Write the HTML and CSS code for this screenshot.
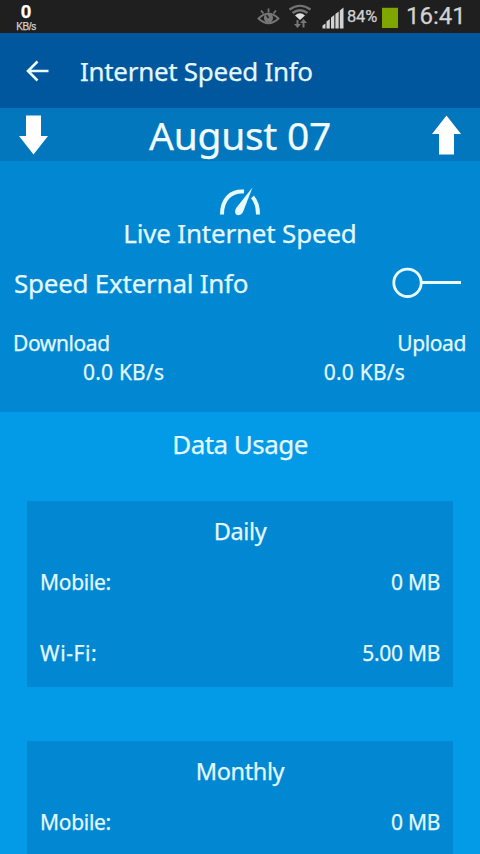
FILE: index.html
```html
<!DOCTYPE html>
<html lang="en">
  <head>
    <meta charset="UTF-8" />
    <meta name="viewport" content="width=device-width, initial-scale=1.0" />
    <title>Internet Speed Info</title>
    <link rel="stylesheet" href="styles.css">
  </head>
  <body>
    <div class="status">
      <div class="net-speed">
        <b>0</b>
        <span>KB/s</span>
      </div>
      <svg class="status-icons" width="104" height="33" viewBox="0 0 104 33">
        <!-- smart stay eye -->
        <g fill="none" stroke="#777" stroke-width="1.8">
          <path d="M1.500 18.500Q11.500 9 21.500 18.500Q11.500 28 1.500 18.500Z" />
          <path d="M4 10.500l2.500 3M11.500 8.500v4M19 10.500l-2.500 3" />
        </g>
        <circle cx="11.500" cy="18" r="4.600" fill="#777" />
        <path d="M11.500 18L9.500 15" stroke="#222" stroke-width="1.500" />
        <!-- wifi -->
        <g fill="none" stroke="#747474" stroke-width="2.200">
          <path d="M32.500 9.500Q43 2 53.500 9.500" />
          <path d="M35.500 13Q43 7.500 50.500 13" />
        </g>
        <path d="M38 15.500Q43 11 48 15.500L43 20Z" fill="#ddd" />
        <path d="M40.500 20v6M46.500 21.500v6" stroke="#777" stroke-width="2" />
        <path d="M37 24h7L40.500 28ZM43 23h7L46.500 19Z" fill="#777" />
        <!-- signal -->
        <path d="M65.500 28.500v-3l3-2v5ZM69.500 28.500v-7l3.300-2.500v9.500ZM74 28.500v-11l3.300-2.500v13.500ZM78.400 28.500v-14.500l3.300-2.500v17ZM82.800 28.500v-18l3.700-3v21Z" fill="#d2d2d2" />
      </svg>
      <span class="percent">84%</span>
      <span class="battery"></span>
      <span class="clock">16:41</span>
    </div>

    <div class="header">
      <svg class="back" width="24" height="24" viewBox="0 0 24 24">
        <path d="M23.500 12H3M12.500 2.500L3 12l9.500 9.500" />
      </svg>
      <h1>Internet Speed Info</h1>
    </div>

    <div class="date">
      <svg class="arrow" width="30" height="40" viewBox="0 0 30 40">
        <path d="M8 0.500h15v20.500h7L15.500 39.500 1 21h7Z" />
      </svg>
      <span class="day">August 07</span>
      <svg class="arrow" width="30" height="40" viewBox="0 0 30 40">
        <path d="M7 39.500h15V19h7L14.500 0.500 0 19h7Z" />
      </svg>
    </div>

    <div class="live">
      <svg class="gauge" width="42" height="30" viewBox="0 0 42 30">
        <g fill="none" stroke="#e8f9ff" stroke-width="4">
          <path d="M3 27.500C3 12 12 3.500 25 4.500" />
          <path d="M33.500 10C37.500 14.500 39 20.500 39 27.500" />
        </g>
        <path d="M33.500 0.500L17.500 20.500C13 28 20.500 31 24 25Z" fill="#e8f9ff" />
      </svg>
      <h2>Live Internet Speed</h2>
      <div class="external">
        <span>Speed External Info</span>
        <svg class="switch" width="70" height="32" viewBox="0 0 70 32">
          <circle cx="16.500" cy="15.800" r="13.700" />
          <path d="M30.500 15.500h39.500" />
        </svg>
      </div>
      <div class="labels">
        <span>Download</span>
        <span>Upload</span>
      </div>
      <div class="values">
        <span>0.0 KB/s</span>
        <span>0.0 KB/s</span>
      </div>
    </div>

    <div class="usage">
      <h2 class="usage-title">Data Usage</h2>
      <div class="card">
        <h3>Daily</h3>
        <div class="row"><span>Mobile:</span><span>0 MB</span></div>
        <div class="row"><span class="wifi">Wi-Fi:</span><span>5.00 MB</span></div>
      </div>
      <div class="card monthly">
        <h3>Monthly</h3>
        <div class="row"><span>Mobile:</span><span>0 MB</span></div>
      </div>
    </div>
  </body>
</html>
```
FILE: styles.css
```css
* {
  margin: 0;
  padding: 0;
  box-sizing: border-box;
}
body {
  height: 854px;
  overflow: hidden;
  display: flex;
  flex-direction: column;
  background-color: #039be8;
  color: #e4f8ff;
  font-family: "Noto Sans", sans-serif;
  -webkit-text-stroke: 0.25px;
}
h1,
h2,
h3 {
  font-weight: 400;
}
span {
  white-space: nowrap;
}
.status {
  height: 33px;
  flex: none;
  display: flex;
  align-items: center;
  padding-left: 15px;
  background-color: #1f1f1f;
  color: #d2d2d2;
}
.net-speed {
  width: 22px;
  padding-top: 1px;
  margin-right: 220px;
  text-align: center;
  font-family: "Liberation Sans", sans-serif;
}
.net-speed b {
  display: block;
  font-size: 19px;
  line-height: 18px;
  color: #fff;
}
.net-speed span {
  display: block;
  font-size: 10px;
  line-height: 11px;
  letter-spacing: -0.4px;
}
.status-icons {
  flex: none;
}
.percent {
  width: 32px;
  margin-left: -14px;
  font-family: Roboto, sans-serif;
  font-size: 16.5px;
  letter-spacing: -0.2px;
}
.battery {
  width: 16px;
  height: 20px;
  margin: 3px 8px 0 3px;
  background-color: #7fa600;
  box-shadow: 0 -1px #343b22;
}
.clock {
  font-family: Roboto, sans-serif;
  font-size: 24px;
  line-height: 33px;
}
.header {
  height: 75px;
  flex: none;
  display: flex;
  align-items: center;
  padding-left: 25px;
  background-color: #01579e;
}
.back {
  margin-right: 31px;
  fill: none;
  stroke: #e8f9ff;
  stroke-width: 2.6;
}
.header h1 {
  font-size: 26px;
  letter-spacing: -0.3px;
}
.date {
  height: 53px;
  flex: none;
  display: flex;
  align-items: center;
  justify-content: space-between;
  padding: 0 18px;
  background-color: #0277bd;
}
.arrow {
  fill: #fff;
}
.day {
  font-size: 39px;
  line-height: 53px;
  letter-spacing: -0.3px;
  color: #f2fcff;
}
.live {
  height: 251px;
  flex: none;
  padding: 26px 14px 0;
  background-color: #0288d3;
}
.gauge {
  display: block;
  margin: 0 auto;
}
.live h2 {
  font-size: 26px;
  line-height: 32px;
  letter-spacing: -0.2px;
  text-align: center;
}
.external {
  display: flex;
  justify-content: space-between;
  margin-top: 18px;
  padding-right: 5px;
  font-size: 26px;
  line-height: 32px;
  letter-spacing: -0.25px;
}
.switch {
  fill: none;
  stroke: #e8f9ff;
  stroke-width: 2.8;
}
.labels {
  display: flex;
  justify-content: space-between;
  margin: 30px 0 0 -1px;
  font-size: 21px;
  line-height: 29px;
  letter-spacing: -0.4px;
}
.values {
  display: flex;
  justify-content: space-between;
  padding: 0 61px 0 69px;
  font-size: 21px;
  line-height: 29px;
  letter-spacing: 0.2px;
}
.usage {
  padding: 16px 27px 0;
}
.usage-title {
  margin-bottom: 41px;
  font-size: 26px;
  line-height: 32px;
  letter-spacing: -0.55px;
  text-align: center;
}
.card {
  height: 186px;
  margin-bottom: 54px;
  padding: 14px 13px 0;
  background-color: #0288d3;
}
.card.monthly {
  height: 113px;
  margin-bottom: 0;
}
.card h3 {
  margin-bottom: 20px;
  font-size: 23.5px;
  line-height: 32px;
  letter-spacing: -0.4px;
  text-align: center;
}
.row {
  display: flex;
  justify-content: space-between;
  margin-bottom: 41px;
  font-size: 21px;
  line-height: 30px;
  letter-spacing: -0.3px;
}
.row:last-child {
  margin-bottom: 0;
}
.row .wifi {
  letter-spacing: 0.6px;
}
```
